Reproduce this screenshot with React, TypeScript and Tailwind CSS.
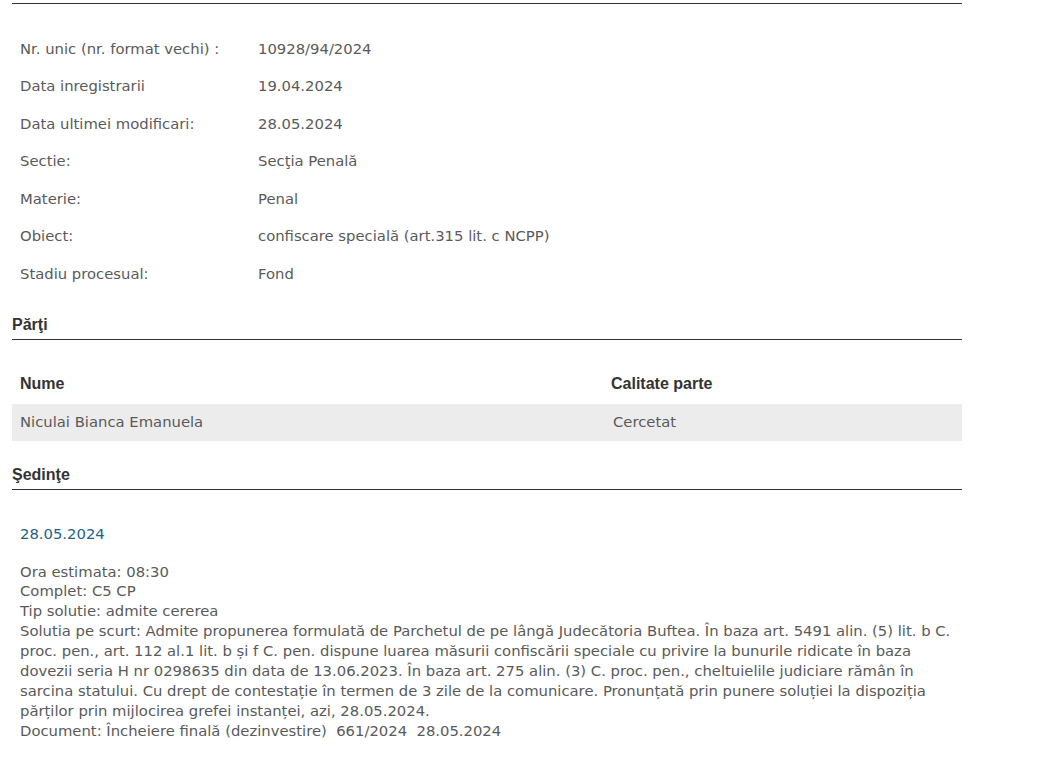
const details: [string, string][] = [
  ['Nr. unic (nr. format vechi) :', '10928/94/2024'],
  ['Data inregistrarii', '19.04.2024'],
  ['Data ultimei modificari:', '28.05.2024'],
  ['Sectie:', 'Secţia Penală'],
  ['Materie:', 'Penal'],
  ['Obiect:', 'confiscare specială (art.315 lit. c NCPP)'],
  ['Stadiu procesual:', 'Fond'],
];

// lines as the page wraps them
const solutie = [
  'Solutia pe scurt: Admite propunerea formulată de Parchetul de pe lângă Judecătoria Buftea. În baza art. 5491 alin. (5) lit. b C.',
  'proc. pen., art. 112 al.1 lit. b și f C. pen. dispune luarea măsurii confiscării speciale cu privire la bunurile ridicate în baza',
  'dovezii seria H nr 0298635 din data de 13.06.2023. În baza art. 275 alin. (3) C. proc. pen., cheltuielile judiciare rămân în',
  'sarcina statului. Cu drept de contestație în termen de 3 zile de la comunicare. Pronunțată prin punere soluției la dispoziția',
  'părților prin mijlocirea grefei instanței, azi, 28.05.2024.',
];

function SectionTitle({ title, className }: { title: string; className?: string }) {
  return (
    <div className={`border-b border-[#333] pb-[4px] ${className ?? ''}`}>
      <h2 className="font-['Liberation_Sans',Arial,sans-serif] text-[16px] leading-[20px] font-bold text-[#333]">{title}</h2>
    </div>
  );
}

export default function App() {
  return (
    <main className="min-h-screen bg-white font-['DejaVu_Sans',Tahoma,sans-serif] text-[14.8px] text-[#5a5a5a]">
      <div className="ml-3 w-[950px] pt-[3px] pb-10">
        <div className="border-t border-[#333]" />

        <div className="pt-[26px] pl-2">
          {details.map(([label, value]) => (
            <div key={label} className="flex h-[37.5px] items-center">
              <span className="w-[238px] shrink-0">{label}</span>
              <span>{value}</span>
            </div>
          ))}
        </div>

        <SectionTitle title="Părţi" className="mt-[22px]" />

        <div className="mt-[24px]">
          <div className="flex h-[40px] items-center pl-2 font-['Liberation_Sans',Arial,sans-serif] text-[16px] font-bold text-[#333]">
            <span className="w-[591px] shrink-0">Nume</span>
            <span>Calitate parte</span>
          </div>
          <div className="flex h-[37px] items-center bg-[#ececec] pl-2">
            <span className="w-[593px] shrink-0">Niculai Bianca Emanuela</span>
            <span>Cercetat</span>
          </div>
        </div>

        <SectionTitle title="Şedinţe" className="mt-[24px]" />

        <div className="pl-2">
          <div className="mt-[34px] leading-[20px] text-[#1f5f8b]">28.05.2024</div>
          <div className="mt-[18px] leading-[19.875px] whitespace-pre">
            <div>Ora estimata: 08:30</div>
            <div>Complet: C5 CP</div>
            <div>Tip solutie: admite cererea</div>
            {solutie.map((line) => (
              <div key={line}>{line}</div>
            ))}
            <div>Document: Încheiere finală (dezinvestire)  661/2024  28.05.2024</div>
          </div>
        </div>
      </div>
    </main>
  );
}
